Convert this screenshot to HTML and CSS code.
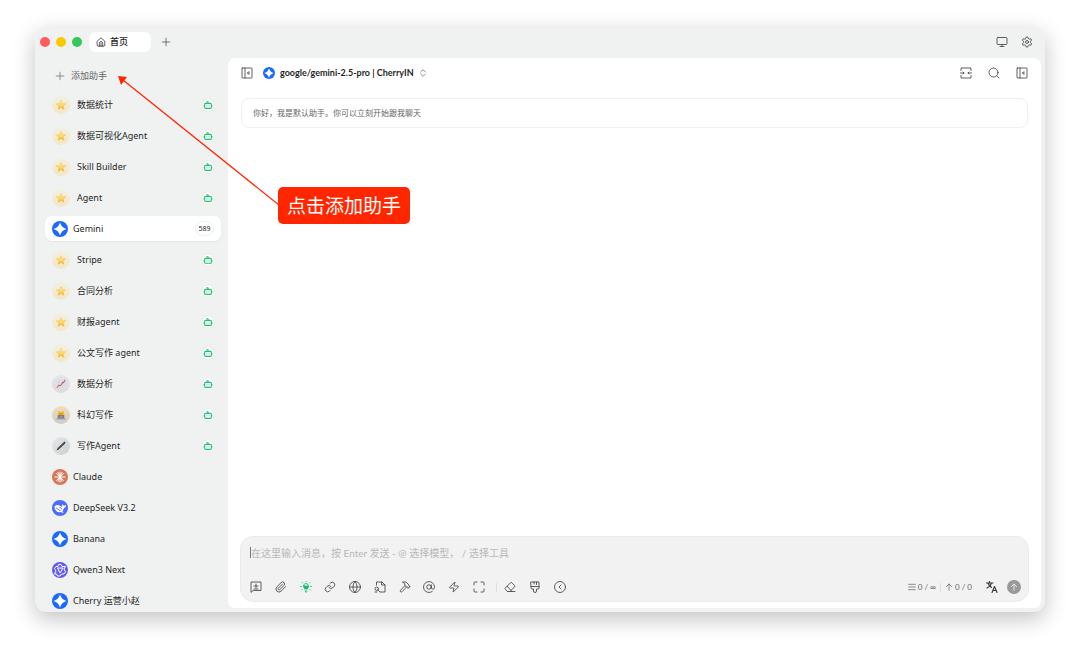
FILE: index.html
```html
<!DOCTYPE html>
<html lang="zh-CN">
<head>
  <meta charset="UTF-8">
  <meta name="viewport" content="width=device-width, initial-scale=1.0">
  <title>Cherry Studio</title>
  <link rel="stylesheet" href="styles.css">
</head>
<body>

<!-- Shared icons -->
<svg class="sprite" aria-hidden="true">
  <defs>
    <linearGradient id="gold" x1="0" y1="0" x2="0" y2="1">
      <stop offset="0" stop-color="#fff3a0"/>
      <stop offset=".6" stop-color="#ffd84a"/>
      <stop offset="1" stop-color="#f0a33a"/>
    </linearGradient>
  </defs>
  <symbol id="i-plus" viewBox="0 0 24 24"><path d="M3 12h18M12 3v18"/></symbol>
  <symbol id="i-panel" viewBox="0 0 24 24"><rect x="2" y="2" width="20" height="20" rx="1"/><path d="M8 2v20M16 9l-3 3 3 3M13 12h4"/></symbol>
  <symbol id="i-star" viewBox="0 0 24 24"><path fill="url(#gold)" stroke="#e8b04a" stroke-width="1" stroke-linejoin="round" d="M12 1.500l3 7.200 8 .6-6.100 5.200 2 7.800-6.900-4.200-6.900 4.200 2-7.800L1 9.300l8-.6z"/></symbol>
  <symbol id="i-bot" viewBox="0 0 24 24"><path d="M12 8V4H8M1 14h3M20 14h3M15 13v2M9 13v2"/><rect x="4" y="8" width="16" height="12" rx="2"/></symbol>
  <symbol id="i-gemini" viewBox="0 0 32 32"><circle cx="16" cy="16" r="16" fill="#1c69ff"/><path fill="#fff" d="M16 3c2 7 6 11 13 13-7 2-11 6-13 13-2-7-6-11-13-13 7-2 11-6 13-13z"/></symbol>
</svg>

<div class="window">
  <header class="titlebar">
    <div class="lights">
      <span class="light red"></span>
      <span class="light yellow"></span>
      <span class="light green"></span>
    </div>
    <button class="tab">
      <svg class="icon" viewBox="0 0 24 24"><path d="M3 10l9-8 9 8v10a2 2 0 0 1-2 2H5a2 2 0 0 1-2-2zM8 22v-7a4 4 0 0 1 8 0v7M12 15v7"/></svg>
      首页
    </button>
    <button class="icon-btn" aria-label="新标签页"><svg class="icon"><use href="#i-plus"/></svg></button>
    <div class="titlebar-right">
      <button class="icon-btn" aria-label="显示"><svg class="icon md" viewBox="0 0 24 24"><rect x="2" y="3" width="20" height="14" rx="2"/><path d="M8 21h8M12 17v4"/></svg></button>
      <button class="icon-btn" aria-label="设置"><svg class="icon md" viewBox="0 0 24 24"><path d="M9.500 5L10.500 2h3l1 3 2 1.200 3.200-.7 1.600 2.700L19 10.700v2.600l2.300 2.500-1.600 2.700-3.200-.7-2 1.200-1 3h-3l-1-3-2-1.200-3.200.7-1.600-2.700L5 13.300v-2.600L2.700 8.200l1.600-2.700 3.200.7z"/><circle cx="12" cy="12" r="3"/></svg></button>
    </div>
  </header>

  <div class="content">
    <aside class="sidebar">
      <button class="add"><svg class="icon"><use href="#i-plus"/></svg>添加助手</button>
      <nav class="list">
        <button class="item"><span class="emoji gold"><svg><use href="#i-star"/></svg></span>数据统计<span class="bot"><svg><use href="#i-bot"/></svg></span></button>
        <button class="item"><span class="emoji gold"><svg><use href="#i-star"/></svg></span>数据可视化Agent<span class="bot"><svg><use href="#i-bot"/></svg></span></button>
        <button class="item"><span class="emoji gold"><svg><use href="#i-star"/></svg></span>Skill Builder<span class="bot"><svg><use href="#i-bot"/></svg></span></button>
        <button class="item"><span class="emoji gold"><svg><use href="#i-star"/></svg></span>Agent<span class="bot"><svg><use href="#i-bot"/></svg></span></button>
        <button class="item active"><svg class="logo"><use href="#i-gemini"/></svg>Gemini<span class="count">589</span></button>
        <button class="item"><span class="emoji gold"><svg><use href="#i-star"/></svg></span>Stripe<span class="bot"><svg><use href="#i-bot"/></svg></span></button>
        <button class="item"><span class="emoji gold"><svg><use href="#i-star"/></svg></span>合同分析<span class="bot"><svg><use href="#i-bot"/></svg></span></button>
        <button class="item"><span class="emoji gold"><svg><use href="#i-star"/></svg></span>财报agent<span class="bot"><svg><use href="#i-bot"/></svg></span></button>
        <button class="item"><span class="emoji gold"><svg><use href="#i-star"/></svg></span>公文写作 agent<span class="bot"><svg><use href="#i-bot"/></svg></span></button>
        <button class="item">
          <span class="emoji chart"><svg viewBox="0 0 24 24"><rect x="1" y="1" width="22" height="22" rx="1" fill="#dde2ea"/><path d="M1 8h22M1 15h22M8 1v22M15 1v22" stroke="#c0cad8" fill="none"/><path d="M2 21l5-6 4 1 5-8 2 1 4-7" stroke="#e0525c" stroke-width="2.500" fill="none"/></svg></span>
          数据分析<span class="bot"><svg><use href="#i-bot"/></svg></span>
        </button>
        <button class="item">
          <span class="emoji coder"><svg viewBox="0 0 24 24"><path d="M5 2l4 2h6l4-2v12H5z" fill="#f9b71c"/><path d="M9 8v2M15 8v2M11 11h2" stroke="#6b4a10" stroke-width="1.500"/><rect x="4" y="12" width="16" height="9" rx="1" fill="#7c8088"/><circle cx="12" cy="16" r="1.500" fill="#b9bdc3"/><path d="M1 20h22v3H1z" fill="#a196c9"/></svg></span>
          科幻写作<span class="bot"><svg><use href="#i-bot"/></svg></span>
        </button>
        <button class="item">
          <span class="emoji pen"><svg viewBox="0 0 24 24"><path d="M1 23l3-6L17 4l4-3 2 2-2 4L7 20z" fill="#3c4249"/><path d="M7 16L19 4" stroke="#8f979f"/></svg></span>
          写作Agent<span class="bot"><svg><use href="#i-bot"/></svg></span>
        </button>
        <button class="item">
          <svg class="logo" viewBox="0 0 32 32"><circle cx="16" cy="16" r="16" fill="#d97757"/><path d="M16 6v20M6 16h20M9 9l14 14M23 9L9 23M12 7l8 18M20 7l-8 18" stroke="#fff" stroke-width="2" stroke-linecap="round"/></svg>
          Claude
        </button>
        <button class="item">
          <svg class="logo" viewBox="0 0 32 32"><circle cx="16" cy="16" r="16" fill="#4d6bfe"/><path fill="#fff" d="M5 13c3-4 8-4 12-1 2 1 3 2 4 1-1-2-1-3 0-5 1 2 2 3 3 3s2 0 4-1c0 4-2 6-4 6-1 4-3 6-3 7 1 1 2 1 2 2-2 1-4 0-5-1-7 2-13-3-13-11z"/><path d="M9 16c2 0 4 5 7 5M16 15c2 0 3 1 3 3" fill="none" stroke="#4d6bfe" stroke-width="2" stroke-linecap="round"/></svg>
          DeepSeek V3.2
        </button>
        <button class="item"><svg class="logo"><use href="#i-gemini"/></svg>Banana</button>
        <button class="item">
          <svg class="logo" viewBox="0 0 32 32"><circle cx="16" cy="16" r="16" fill="#615ced"/><g fill="none" stroke="#fff" stroke-width="2" stroke-linejoin="round"><path d="M13 5h5l2 4h7l-3 5 3 6-3 4h-5l-3 4h-5l-2-4H5l3-6-3-5 3-4h4z"/><path d="M11 12h11l-6 10z"/></g></svg>
          Qwen3 Next
        </button>
        <button class="item"><svg class="logo"><use href="#i-gemini"/></svg>Cherry 运营小赵</button>
      </nav>
    </aside>

    <main class="chat">
      <div class="chat-header">
        <button class="icon-btn" aria-label="收起侧栏"><svg class="icon md"><use href="#i-panel"/></svg></button>
        <button class="model">
          <svg class="model-logo"><use href="#i-gemini"/></svg>
          google/gemini-2.5-pro | CherryIN
          <svg class="icon sm" viewBox="0 0 24 24"><path d="M5 9l7-7 7 7M5 15l7 7 7-7"/></svg>
        </button>
        <div class="chat-tools">
          <button class="icon-btn" aria-label="宽度"><svg class="icon md" viewBox="0 0 24 24"><path d="M2 7V2h20v5M2 17v5h20v-5M1 12h7M6 10l2 2-2 2M23 12h-7M18 10l-2 2 2 2"/></svg></button>
          <button class="icon-btn" aria-label="搜索"><svg class="icon md" viewBox="0 0 24 24"><circle cx="11" cy="11" r="9"/><path d="M18 18l4 4"/></svg></button>
          <button class="icon-btn" aria-label="话题"><svg class="icon md"><use href="#i-panel"/></svg></button>
        </div>
      </div>

      <div class="messages">
        <p class="prompt">你好，我是默认助手。你可以立刻开始跟我聊天</p>
      </div>

      <form class="composer">
        <div class="field">
          <textarea rows="1" aria-label="消息" placeholder="在这里输入消息，按 Enter 发送 - @ 选择模型， / 选择工具"></textarea>
          <span class="caret"></span>
        </div>
        <div class="toolbar">
          <div class="tools">
            <button type="button" aria-label="新话题"><svg class="icon md" viewBox="0 0 24 24"><path d="M2 22V2h20v17H7zM12 6v8M8 10h8M8 16h8"/></svg></button>
            <button type="button" aria-label="附件"><svg class="icon md" viewBox="0 0 24 24"><path d="M21.400 11.100l-9.200 9.100a6 6 0 0 1-8.500-8.500l8.600-8.500a4 4 0 1 1 5.600 5.700l-8.600 8.500a2 2 0 0 1-2.800-2.800l8.500-8.500"/></svg></button>
            <button type="button" class="on" aria-label="思考"><svg class="icon md" viewBox="0 0 24 24"><path fill="currentColor" d="M7 10h10c0 3-2 4-2 6H9c0-2-2-3-2-6z"/><path d="M7 10a5 5 0 0 1 10 0M10 20h4M11 22h2M12 1v1M1 11h2M21 11h2M4 3l1 1M20 3l-1 1M3 18l1-1M21 18l-1-1"/></svg></button>
            <button type="button" aria-label="链接"><svg class="icon md" viewBox="0 0 24 24"><path d="M10 13a5 5 0 0 0 7.500.5l3-3a5 5 0 0 0-7-7l-1.800 1.700M14 11a5 5 0 0 0-7.500-.5l-3 3a5 5 0 0 0 7 7l1.700-1.700"/></svg></button>
            <button type="button" aria-label="联网"><svg class="icon md" viewBox="0 0 24 24"><circle cx="12" cy="12" r="11"/><path d="M12 1a16 16 0 0 0 0 22 16 16 0 0 0 0-22M1 12h22"/></svg></button>
            <button type="button" aria-label="知识库"><svg class="icon md" viewBox="0 0 24 24"><path d="M5 8V2h11l6 6v14H13M15 2v6h7"/><circle cx="5.500" cy="15.500" r="3.500"/><path d="M8 18l4 4M2 22h4"/></svg></button>
            <button type="button" aria-label="工具"><svg class="icon md" viewBox="0 0 24 24"><path d="M15 12l-9 9.500a2 2 0 0 1-3-3L12 9M18 15l4-4M21.500 11.500L20 10V8l-6-6H7l4 3 1 4 3 3h2l2 2"/></svg></button>
            <button type="button" aria-label="提及模型"><svg class="icon md" viewBox="0 0 24 24"><circle cx="12" cy="12" r="4.500"/><path d="M16.500 7.500v5.500a3 3 0 0 0 6.500 0v-1a11 11 0 1 0-4.500 9"/></svg></button>
            <button type="button" aria-label="快捷短语"><svg class="icon md" viewBox="0 0 24 24"><path d="M4 14a1 1 0 0 1-.8-1.600l10-10.200a.5.5 0 0 1 .8.500l-2 6a1 1 0 0 0 1 1.300h7a1 1 0 0 1 .8 1.600l-10 10.200a.5.5 0 0 1-.8-.500l2-6a1 1 0 0 0-1-1.300z"/></svg></button>
            <button type="button" aria-label="展开"><svg class="icon md" viewBox="0 0 24 24"><path d="M8 2H4a2 2 0 0 0-2 2v4M16 2h4a2 2 0 0 1 2 2v4M2 16v4a2 2 0 0 0 2 2h4M22 16v4a2 2 0 0 1-2 2h-4"/></svg></button>
          </div>
          <span class="divider"></span>
          <div class="tools short">
            <button type="button" aria-label="清空"><svg class="icon md" viewBox="0 0 24 24"><path d="M7 21l-4.300-4.300a2 2 0 0 1 0-2.800L13 3.500a2 2 0 0 1 2.800 0L21 9a2 2 0 0 1 0 2.800L12 21M22 21H7M6 10.500l8.500 8.500"/></svg></button>
            <button type="button" aria-label="清除上下文"><svg class="icon md" viewBox="0 0 24 24"><path d="M4 2h16v12a2 2 0 0 1-2 2h-3v4a3 3 0 0 1-6 0v-4H6a2 2 0 0 1-2-2zM4 11h16M10 2v4M15 2v5"/></svg></button>
            <button type="button" aria-label="收起"><svg class="icon md" viewBox="0 0 24 24"><circle cx="12" cy="12" r="11"/><path d="M14 8l-4 4 4 4"/></svg></button>
          </div>
          <div class="stats">
            <svg class="icon sm" viewBox="0 0 24 24"><path d="M2 4h20M2 12h20M2 20h20"/></svg>
            <span>0 / ∞</span>
            <span class="divider"></span>
            <svg class="icon sm" viewBox="0 0 24 24"><path d="M12 22V3M4 11l8-8 8 8"/></svg>
            <span>0 / 0</span>
          </div>
          <button type="button" class="icon-btn" aria-label="翻译"><svg class="icon md dark" viewBox="0 0 24 24"><path d="M1 4h13M7 1v3M2 14c4-2 8-5 9-10M4 4c1 4 4 7 7 9M12 23l5-12 5 12M14 19h6"/></svg></button>
          <button type="submit" class="send" aria-label="发送"><svg class="icon sm" viewBox="0 0 24 24"><path d="M12 22V3M4 11l8-8 8 8"/></svg></button>
        </div>
      </form>
    </main>
  </div>

  <!-- Callout pointing at the add button -->
  <svg class="arrow" viewBox="0 0 161 130" aria-hidden="true">
    <path d="M161 129L5 4" stroke="#ff2600" stroke-width="1.300"/>
    <path d="M0 0l9 1-6 8z" fill="#ff2600"/>
  </svg>
  <div class="callout">点击添加助手</div>
</div>

</body>
</html>
```

FILE: styles.css
```css
* {
  box-sizing: border-box;
}

body {
  margin: 0;
  padding: 27px 35px 42px;
  height: 100vh;
  background: #fff;
  color: #1f1f1f;
  font-family: "Noto Sans", "Noto Sans CJK SC", sans-serif;
  font-size: 9px;
  line-height: 12px;
}

button {
  display: flex;
  align-items: center;
  padding: 0;
  border: none;
  background: none;
  color: inherit;
  font: inherit;
  cursor: pointer;
}

svg {
  display: block;
  flex: none;
}

.sprite {
  position: absolute;
  width: 0;
  height: 0;
}

.icon {
  width: 10px;
  height: 10px;
  fill: none;
  stroke: currentColor;
  stroke-width: 1.7;
  stroke-linecap: round;
  stroke-linejoin: round;
}

.icon.sm {
  width: 8px;
  height: 8px;
  stroke-width: 2.2;
}

.icon.md {
  width: 12px;
  height: 12px;
}

.icon.dark {
  color: #333;
  stroke-width: 2.2;
}

.icon-btn {
  justify-content: center;
  width: 20px;
  height: 20px;
  color: #444;
}

.window {
  position: relative;
  display: flex;
  flex-direction: column;
  height: 100%;
  border-radius: 11px;
  background: #f0f2f2;
  box-shadow: 0 7px 22px rgba(0, 0, 0, 0.24);
}

/* Title bar */
.titlebar {
  display: flex;
  align-items: center;
  height: 31px;
  padding: 0 8px 1px 5px;
}

.lights {
  display: flex;
  gap: 6px;
  margin-right: 7px;
}

.light {
  width: 10px;
  height: 10px;
  border-radius: 50%;
}

.red {
  background: #ff5b60;
}

.yellow {
  background: #fcc800;
}

.green {
  background: #34c759;
}

.tab {
  gap: 4px;
  width: 62px;
  height: 20px;
  padding-left: 7px;
  border-radius: 7px;
  background: #fff;
  font-weight: 500;
}

.tab + .icon-btn {
  margin-left: 5px;
}

.titlebar-right {
  display: flex;
  gap: 5px;
  margin-left: auto;
}

.content {
  flex: 1;
  display: flex;
  min-height: 0;
  padding: 0 4px 4px 0;
}

/* Assistants */
.sidebar {
  width: 193px;
  flex: none;
  margin-bottom: -4px;
  padding: 5px 7px 0 10px;
  overflow: hidden;
  border-radius: 0 0 0 11px;
}

.add {
  gap: 6px;
  width: 100%;
  height: 25px;
  margin-bottom: 4px;
  padding-left: 10px;
  color: #666;
}

.list {
  display: flex;
  flex-direction: column;
  gap: 6px;
}

.item {
  gap: 5px;
  height: 25px;
  padding: 0 7px;
  border-radius: 7px;
  text-align: left;
}

.item.active {
  background: #fff;
  box-shadow: 0 1px 2px rgba(0, 0, 0, 0.06);
}

.logo {
  width: 16px;
  height: 16px;
}

.emoji {
  display: flex;
  align-items: center;
  justify-content: center;
  width: 18px;
  height: 18px;
  margin-right: 2px;
  border-radius: 50%;
}

.emoji svg {
  width: 10px;
  height: 10px;
}

.gold {
  background: linear-gradient(#f3efe2, #f3e6c2);
}

.chart {
  background: linear-gradient(#e6e3e8, #dfd9de);
}

.coder {
  background: linear-gradient(#eedfb8, #cfccc4);
}

.pen {
  background: linear-gradient(135deg, #e6e8e9, #cccfd1);
}

.bot {
  display: flex;
  align-items: center;
  justify-content: center;
  width: 12px;
  height: 12px;
  margin-left: auto;
  border-radius: 50%;
  background: #fff;
  box-shadow: 0 0 1px rgba(0, 0, 0, 0.2);
}

.bot svg {
  width: 10px;
  height: 10px;
  fill: none;
  stroke: #1fc073;
  stroke-width: 2.6;
}

.count {
  width: 19px;
  margin-left: auto;
  border: 1px solid #efefef;
  border-radius: 8px;
  font-size: 7px;
  line-height: 13px;
  text-align: center;
}

/* Chat */
.chat {
  flex: 1;
  display: flex;
  flex-direction: column;
  min-width: 0;
  padding: 0 12px 6px;
  border-radius: 7px;
  background: #fff;
}

.chat-header {
  display: flex;
  align-items: center;
  height: 30px;
  margin: 0 -3px;
}

.model {
  gap: 5px;
  margin-left: 6px;
  font-family: Lato, "Noto Sans CJK SC", sans-serif;
  font-weight: 700;
}

.model-logo {
  width: 12px;
  height: 12px;
}

.model .icon {
  color: #666;
}

.chat-tools {
  display: flex;
  gap: 8px;
  margin-left: auto;
}

.messages {
  flex: 1;
  padding: 10px 1px;
}

.prompt {
  margin: 0;
  padding: 8px 11px;
  border: 1px solid #f0f0f0;
  border-radius: 8px;
  color: #666;
  font-size: 8px;
}

.composer {
  padding: 8px 4px 3px 3px;
  border: 1px solid #ebebeb;
  border-radius: 13px;
  background: #f2f2f2;
}

.field {
  position: relative;
  padding: 0 7px;
}

.field textarea {
  display: block;
  width: 100%;
  height: 31px;
  padding: 0;
  border: none;
  outline: none;
  resize: none;
  background: none;
  color: #333;
  font-family: Lato, "Noto Sans CJK SC", sans-serif;
  font-size: 10px;
  line-height: 16px;
}

.field textarea::placeholder {
  color: #b8b8b8;
}

.caret {
  position: absolute;
  left: 6px;
  top: 2px;
  width: 1px;
  height: 11px;
  background: #777;
}

.toolbar {
  display: flex;
  align-items: center;
  height: 22px;
}

.tools {
  display: flex;
  width: 247px;
  color: #444;
}

.tools.short {
  width: 75px;
}

.tools button {
  flex: 1;
  justify-content: center;
  height: 20px;
}

.tools .on {
  color: #12bf74;
}

.divider {
  width: 1px;
  height: 9px;
  margin: 0 2px;
  background: #e0e0e0;
}

.tools + .divider {
  margin: 0 0 0 5px;
}

.stats {
  display: flex;
  align-items: center;
  gap: 2px;
  margin-left: auto;
  margin-right: 10px;
  color: #666;
  font-family: Lato, "Noto Sans", sans-serif;
  font-size: 8px;
}

.send {
  justify-content: center;
  width: 14px;
  height: 14px;
  margin: 0 3px 0 5px;
  border-radius: 50%;
  background: #999;
  color: #fff;
}

/* Annotation */
.arrow {
  position: absolute;
  left: 83px;
  top: 49px;
  width: 161px;
  height: 130px;
  fill: none;
}

.callout {
  position: absolute;
  left: 243px;
  top: 160px;
  padding: 1px 9px 0;
  border-radius: 5px;
  background: #ff2600;
  color: #fff;
  font-size: 19px;
  line-height: 36px;
}
```
